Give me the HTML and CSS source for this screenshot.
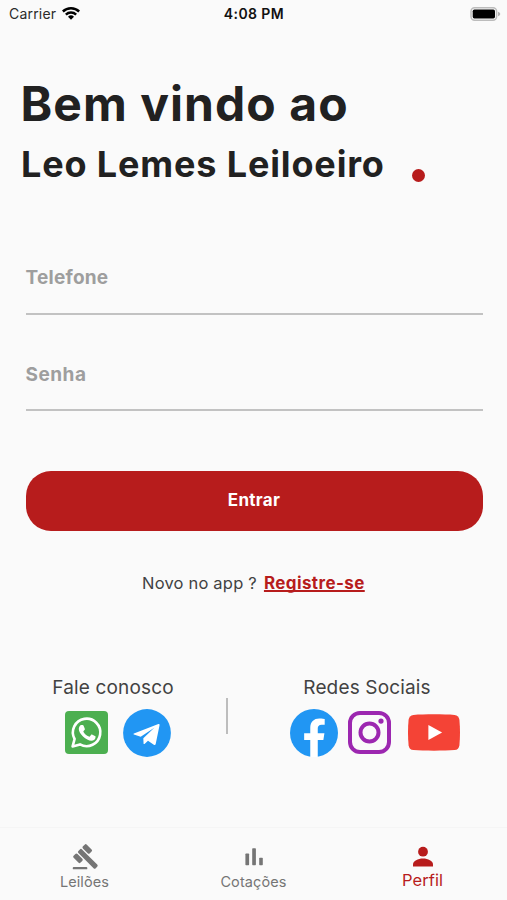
FILE: index.html
```html
<!DOCTYPE html>
<html lang="pt-BR">
<head>
<meta charset="utf-8">
<title>Leo Lemes Leiloeiro</title>
<link rel="stylesheet" href="styles.css">
</head>
<body>
<div class="app">
  <header class="status">
    <div class="carrier"><span>Carrier</span>
      <svg class="wifi" viewBox="0 0 18 14"><path d="M0 4.6a12.8 12.8 0 0 1 18 0l-1.7 1.8a10.4 10.4 0 0 0-14.6 0z"/><path d="M3 7.7a8.6 8.6 0 0 1 12 0l-1.7 1.8a6.2 6.2 0 0 0-8.6 0z"/><path d="M6 10.8a4.3 4.3 0 0 1 6 0l-3 3z"/></svg>
    </div>
    <div class="clock">4:08 PM</div>
    <svg class="battery" viewBox="0 0 31 14"><rect x="1" y=".8" width="25.6" height="12.4" rx="3.6" fill="#fafafa" stroke="#bcbcbc" stroke-width="1.5"/><rect x="2.7" y="2.5" width="22.3" height="9" rx="1.7"/><path d="M28 4.7c1.5.5 2.2 1.3 2.2 2.3S29.500 8.800 28 9.300z" fill="#b3b3b3"/></svg>
  </header>
  <h1 class="welcome">Bem vindo ao</h1>
  <div class="brand"><h2>Leo Lemes Leiloeiro</h2><span class="dot"></span></div>
  <form class="login">
    <div class="field phone"><span>Telefone</span></div>
    <div class="field password"><span>Senha</span></div>
    <button class="submit" type="button"><span>Entrar</span></button>
  </form>
  <p class="signup"><span>Novo no app ?</span><a>Registre-se</a></p>
  <section class="contacts">
    <div class="group talk">
      <h3>Fale conosco</h3>
      <div class="icons">
        <svg class="whatsapp" viewBox="0 0 43 43"><rect width="43" height="43" rx="4" fill="#4caf50"/><path d="M7.600 35.400l2-7.400A13.700 13.700 0 1 1 15 33.400z" fill="none" stroke="#fff" stroke-width="2.600" stroke-linejoin="round"/><path d="M16.300 14h1.300c.5 0 .8.200 1 .7l1.200 3c.2.400.1.700-.1 1l-1.100 1.400c-.3.300-.3.500-.1.900 1.300 2.200 3 3.600 5.400 4.600.4.200.6.100.9-.2l1.200-1.500c.3-.4.600-.4 1-.3l2.900 1.400c.5.200.7.400.7.700 0 2.400-1.800 4-4.300 4-2.200 0-5.700-1.500-8.300-4.200-2.500-2.500-4.200-5.300-4.200-7.500 0-1.600.8-3.100 1.700-3.800.3-.2.500-.2.800-.2z" fill="#fff"/></svg>
        <svg class="telegram" viewBox="0 0 48 48"><circle cx="24" cy="24" r="23.900" fill="#2196f3"/><path d="M35.400 15.100L10.900 24.500c-.6.300-.6.800 0 1l6.800 2.300L31.300 18.700 20.300 29.300 20.600 34.900c.4.300.8.200 1.200-.2l3.200-3 5.800 4.100c.9.600 1.700.3 1.900-.8l3.800-18.600c.2-1.100-.4-1.600-1.100-1.300z" fill="#fff"/></svg>
      </div>
    </div>
    <div class="divider"></div>
    <div class="group social">
      <h3>Redes Sociais</h3>
      <div class="icons">
        <svg class="facebook" viewBox="0 0 24 24"><circle cx="12" cy="12" r="12" fill="#2196f3"/><path d="M10.130 24v-8.440H7.080v-3.490h3.050V9.410c0-3.020 1.790-4.690 4.530-4.690 1.310 0 2.690.24 2.690.24v2.970h-1.520c-1.490 0-1.950.93-1.950 1.880v2.260h3.330l-.53 3.490h-2.800V24z" fill="#fff"/></svg>
        <svg class="instagram" viewBox="0 0 43 43" fill="none" stroke="#9c27b0" stroke-width="4"><rect x="2" y="2" width="39" height="39" rx="10"/><circle cx="21.500" cy="21.500" r="9"/><circle cx="33" cy="10.100" r="2.600" fill="#9c27b0" stroke="none"/></svg>
        <svg class="youtube" viewBox="0 0 52 37"><path d="M5.500.9C16 .1 36 .1 46.500.9c3 .3 4.500 2 4.900 4.900.8 8 .8 17.400 0 25.400-.4 2.900-1.900 4.600-4.900 4.900-10.500.8-30.500.8-41 0-3-.3-4.500-2-4.900-4.900-.8-8-.8-17.400 0-25.400C1 2.900 2.500 1.200 5.500.9z" fill="#f44336"/><path d="M20.400 11.100v15l13.700-7.500z" fill="#fff"/></svg>
      </div>
    </div>
  </section>
  <nav class="tabs">
    <div class="tab auctions"><svg viewBox="0 0 24 24" fill="#757575"><rect x="1.500" y="20.600" width="12.500" height="2" rx=".8"/><g transform="rotate(45 12 12)"><rect x="4.300" y="9.200" width="21" height="4.400" rx="1.300"/><rect x="4.300" y="3.400" width="8.400" height="4.700" rx="1.300"/><rect x="4.300" y="14.700" width="8.400" height="4.700" rx="1.300"/></g></svg><span>Leilões</span></div>
    <div class="tab quotes"><svg viewBox="0 0 28 28" fill="#757575"><rect x="5.400" y="10.500" width="3.700" height="11.700" rx=".7"/><rect x="12.200" y="5.200" width="3.700" height="17" rx=".7"/><rect x="19.200" y="14.700" width="3.600" height="7.500" rx=".7"/></svg><span>Cotações</span></div>
    <div class="tab profile"><svg viewBox="0 0 28 28" fill="#b71c1c"><circle cx="14" cy="8.700" r="4.900"/><path d="M4 23.500v-2.300c0-3.300 5-5.800 10-5.800s10 2.500 10 5.800v2.300z"/></svg><span>Perfil</span></div>
  </nav>
</div>
</body>
</html>
```

FILE: styles.css
```css
* { box-sizing: border-box; margin: 0; padding: 0; }
body { background: #fafafa; color: #212121; font-family: Inter, "Liberation Sans", sans-serif; }
svg { display: block; flex: none; overflow: visible; }
.app { width: 507px; height: 900px; display: flex; flex-direction: column; overflow: hidden; white-space: nowrap; }
.status { height: 28px; display: grid; grid-template-columns: 1fr auto 1fr; align-items: center; padding: 0 6px 0 9px; font-size: 14px; }
.carrier { display: flex; align-items: center; gap: 6px; letter-spacing: .2px; color: #2b2b2b; }
.carrier span, .clock { margin-top: -1px; }
.wifi { width: 18px; height: 14px; margin-top: -2px; }
.clock { font-weight: 600; color: #111; letter-spacing: .4px; margin-right: 2px; }
.battery { width: 31px; height: 14px; justify-self: end; margin-top: -1px; }
.welcome { margin: 46px 0 0 20.500px; font-size: 48px; line-height: 60px; font-weight: 700; letter-spacing: 1.050px; }
.brand { display: flex; align-items: center; margin-left: 21px; height: 60px; }
.brand h2 { font-size: 36px; line-height: 60px; font-weight: 700; letter-spacing: .850px; width: 391px; }
.dot { width: 13px; height: 13px; border-radius: 50%; background: #b71c1c; margin-top: 22px; }
.login { display: flex; flex-direction: column; margin: 68px 24.500px 0 25.500px; }
.field { border-bottom: 2px solid #c2c2c2; padding-top: 1px; font-size: 19px; line-height: 30px; font-weight: 700; color: #9e9e9e; letter-spacing: .250px; }
.phone { height: 52.500px; }
.password { height: 52px; margin-top: 44.500px; letter-spacing: .5px; }
.submit { height: 60px; margin-top: 59.500px; padding-bottom: 2px; border: 0; border-radius: 25px; background: #b71c1c; color: #fff; font: 700 17px Inter, sans-serif; letter-spacing: .3px; }
.signup { display: flex; gap: 7px; margin: 37px 0 0 142px; font-size: 16.500px; line-height: 30px; color: #424242; letter-spacing: .2px; }
.signup a { font-size: 17px; font-weight: 700; color: #b71c1c; letter-spacing: .4px; text-decoration: underline; text-decoration-skip-ink: none; text-decoration-thickness: 1.500px; }
.contacts { display: flex; margin-top: 74px; height: 155px; }
.group { display: flex; flex-direction: column; align-items: center; }
.talk { width: 226px; }
.social { width: 278px; }
.group h3 { font-size: 19px; line-height: 30px; padding-top: 1px; font-weight: 400; color: #424242; letter-spacing: .150px; }
.icons { display: flex; align-items: center; height: 48px; margin-top: 6px; }
.talk .icons { gap: 15px; margin-left: 10px; }
.whatsapp, .instagram { width: 43px; height: 43px; }
.telegram, .facebook { width: 48px; height: 48px; }
.instagram { margin: 0 17px 0 10px; }
.social .icons { margin-left: 16px; }
.youtube { width: 52px; height: 37px; }
.divider { width: 2px; height: 36px; margin-top: 26px; background: #bdbdbd; }
.tabs { flex: 1; border-top: 1px solid #f5f5f5; display: grid; grid-template-columns: repeat(3, 169px); }
.tab { display: flex; flex-direction: column; align-items: center; padding-top: 15px; font-size: 14.500px; line-height: 20px; color: #757575; letter-spacing: .1px; }
.tab svg { width: 28px; height: 28px; }
.auctions span, .quotes span { margin-top: 1px; }
.tab.profile { font-size: 16.500px; color: #b71c1c; }
.profile span { margin-top: -.5px; }
```
